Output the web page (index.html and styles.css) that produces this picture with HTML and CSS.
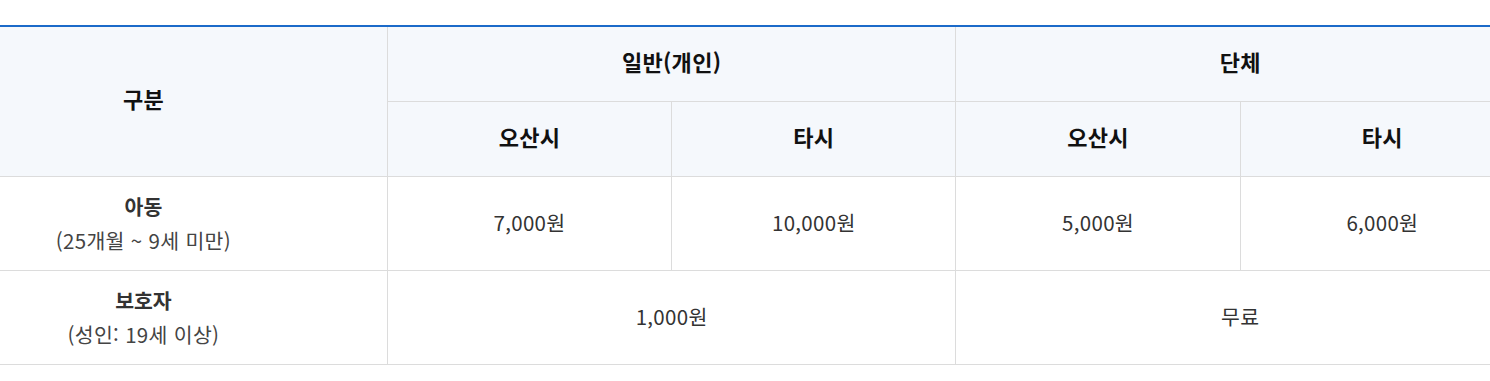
FILE: index.html
```html
<!DOCTYPE html>
<html lang="ko">
<head>
<meta charset="utf-8">
<link rel="stylesheet" href="styles.css">
</head>
<body>
<div class="wrap">
<table class="fee">
<colgroup>
<col class="c-first"><col class="c-col"><col class="c-col"><col class="c-col"><col class="c-col">
</colgroup>
<thead>
<tr class="h1">
<th rowspan="2">구분</th>
<th colspan="2">일반(개인)</th>
<th colspan="2">단체</th>
</tr>
<tr class="h2">
<th>오산시</th>
<th>타시</th>
<th>오산시</th>
<th>타시</th>
</tr>
</thead>
<tbody>
<tr>
<th class="label"><strong>아동</strong><span>(25개월 ~ 9세 미만)</span></th>
<td>7,000원</td>
<td>10,000원</td>
<td>5,000원</td>
<td>6,000원</td>
</tr>
<tr>
<th class="label"><strong>보호자</strong><span>(성인: 19세 이상)</span></th>
<td colspan="2">1,000원</td>
<td colspan="2">무료</td>
</tr>
</tbody>
</table>
</div>
</body>
</html>
```

FILE: styles.css
```css
html, body {
  margin: 0;
  padding: 0;
  background: #fff;
  overflow: hidden;
}
body {
  font-family: "Noto Sans CJK KR", "Noto Sans", sans-serif;
}
.wrap {
  padding-top: 25px;
  margin-left: -100px;
  width: 1625px;
}
.fee {
  width: 1625px;
  border-collapse: collapse;
  table-layout: fixed;
  border-top: 2px solid #1b6ac9;
}
.c-first { width: 30%; }
.c-col { width: 17.5%; }
.fee th, .fee td {
  border: 1px solid #dcdcdc;
  text-align: center;
  vertical-align: middle;
  padding: 0;
}
.fee thead th {
  background: #f5f8fc;
  color: #111;
  font-size: 22px;
  font-weight: 700;
  border-top: none;
  letter-spacing: 0.3px;
  padding-bottom: 6px;
}
.h1, .h2 { height: 75px; }
.fee tbody tr { height: 94px; }
.fee tbody td {
  font-size: 20.5px;
  color: #333;
  font-weight: 400;
  letter-spacing: 0.3px;
  padding-bottom: 2px;
}
.fee tr > :first-child { border-left: none; }
.label {
  font-weight: 400;
  background: #fff;
}
.label strong {
  display: block;
  font-size: 20.5px;
  font-weight: 700;
  color: #333;
  line-height: 34px;
}
.label span {
  display: block;
  font-size: 20.5px;
  color: #444;
  line-height: 34px;
  letter-spacing: 0.3px;
}
```
